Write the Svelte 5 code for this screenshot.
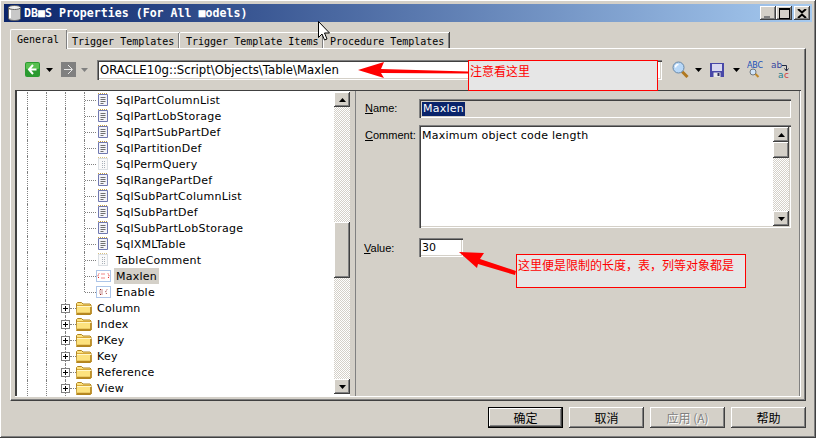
<script>
	const tabs = ["General", "Trigger Templates", "Trigger Template Items", "Procedure Templates"];
	const tabWidths = [57, 112, 144, 126];

	const leaves = [
		["SqlPartColumnList", "doc"],
		["SqlPartLobStorage", "doc"],
		["SqlPartSubPartDef", "doc"],
		["SqlPartitionDef", "doc"],
		["SqlPermQuery", "ghost"],
		["SqlRangePartDef", "doc"],
		["SqlSubPartColumnList", "doc"],
		["SqlSubPartDef", "doc"],
		["SqlSubPartLobStorage", "doc"],
		["SqlXMLTable", "doc"],
		["TableComment", "ghost"],
		["Maxlen", "num"],
		["Enable", "bool"],
	];
	const folders = ["Column", "Index", "PKey", "Key", "Reference", "View"];
	const buttons = ["确定", "取消", "应用 (A)", "帮助"];
</script>

{#snippet caret(dim)}
	<svg class="caret" width="7" height="4" viewBox="0 0 7 4"><path d="M0 0h7L3.5 4z" fill={dim ? "#808080" : "#000"} /></svg>
{/snippet}

{#snippet docIcon(kind)}
	<svg class="ico doc" width="12" height="14" viewBox="0 0 12 14">
		{#if kind === "doc"}
			<path d="M1.5 1.500h9v11h-9z" fill="#f4f4fa" stroke="#7078b0" />
			<path d="M1 .5h10" stroke="#c8a040" stroke-dasharray="1 1" />
			<path d="M3.500 4.500h5M3.500 6.500h5M3.500 8.500h5M3.500 10.500h3" stroke="#707070" />
		{:else}
			<path d="M1.500 1.500h9v11h-9z" fill="#fafafa" stroke="#b8c0c8" stroke-dasharray="1 1" />
			<path d="M1 .5h10" stroke="#d8c080" stroke-dasharray="1 1" />
			<path d="M5.500 4v7M7.500 4v7" stroke="#a8b0b8" stroke-dasharray="1 1" />
		{/if}
	</svg>
{/snippet}

{#snippet codeIcon(kind)}
	<svg class="ico wide" width="15" height="12" viewBox="0 0 15 12">
		<path d="M.5.5h14v11H.5z" fill="#fff" stroke="#5a8ad0" stroke-dasharray="1 1" />
		{#if kind === "num"}
			<path d="M3 3.500 1.800 6 3 8.500M12 3.500 13.200 6 12 8.500M5.500 4h4M5.500 8h4" fill="none" stroke="#e01010" stroke-dasharray="1 1" />
		{:else}
			<path d="M4 3.500h2v5H4zM11 3.500 9.500 6 11 8.500" fill="none" stroke="#902020" stroke-dasharray="1 1" />
		{/if}
	</svg>
{/snippet}

{#snippet folderIcon()}
	<svg class="ico folder" width="16" height="13" viewBox="0 0 16 13">
		<path d="M.5 3V1.500l1-1h4l1.500 1.500h7l1 1v9l-.5.5h-14l-.5-.5z" fill="#fde27e" stroke="#b08420" />
		<path d="M1 3.500h14" stroke="#d8a838" />
		<path d="M1 4.500h14" stroke="#fff6c8" />
		<path d="M1 11.500h14M15 5v7" stroke="#b88820" stroke-width="1.500" />
	</svg>
{/snippet}

<div class="window">
	<header class="titlebar">
		<svg class="app-icon" width="13" height="16" viewBox="0 0 13 16">
			<path d="M.5 2.500v11c0 1.200 2.700 2 6 2s6-.8 6-2v-11z" fill="#c8c8c8" stroke="#606060" />
			<ellipse cx="6.500" cy="2.500" rx="6" ry="2" fill="#f0f0f0" stroke="#606060" />
			<path d="M2 5v8" stroke="#fff" stroke-width="2" />
		</svg>
		<span class="title">DB■S Properties (For All ■odels)</span>
		<div class="controls">
			<button class="ctl" aria-label="Minimize"><i class="min"></i></button>
			<button class="ctl" aria-label="Maximize"><i class="max"></i></button>
			<button class="ctl close" aria-label="Close">
				<svg width="10" height="9" viewBox="0 0 10 9"><path d="M1 0l4 3.500L9 0M1 9l4-3.500L9 9" fill="none" stroke="#000" stroke-width="2" /></svg>
			</button>
		</div>
	</header>

	<nav class="tabs">
		{#each tabs as tab, i}
			<div class="tab" class:active={i === 0} style="width: {tabWidths[i]}px">{tab}</div>
		{/each}
	</nav>

	<section class="panel">
		<div class="toolbar">
			<svg class="tool back" width="15" height="15" viewBox="0 0 15 15">
				<rect width="15" height="15" rx="2" fill="#2a9a30" />
				<rect x="1" y="1" width="13" height="6" rx="1" fill="#58c050" />
				<path d="M8 3 4 7.500 8 12M4.500 7.500h7" fill="none" stroke="#fff" stroke-width="2" />
			</svg>
			<span class="caret-a">{@render caret(false)}</span>
			<svg class="tool fwd" width="15" height="15" viewBox="0 0 15 15">
				<rect width="15" height="15" fill="#808080" />
				<path d="M7 3l4.500 4.500L7 12M3 7.500h8" fill="none" stroke="#e8e8e8" />
			</svg>
			<span class="caret-b">{@render caret(true)}</span>
			<div class="address">ORACLE10g::Script\Objects\Table\Maxlen</div>
			<svg class="tool find" width="17" height="17" viewBox="0 0 17 17">
				<path d="M10 10.500l5.500 5.500" stroke="#b07820" stroke-width="3" />
				<circle cx="6.500" cy="6.500" r="5.500" fill="#b8d8f8" stroke="#6888a8" />
				<path d="M3.500 6.500a3 3 0 0 1 3-3" fill="none" stroke="#fff" stroke-width="1.500" />
			</svg>
			<span class="caret-c">{@render caret(false)}</span>
			<svg class="tool save" width="14" height="14" viewBox="0 0 14 14">
				<rect width="14" height="14" fill="#4848a8" />
				<rect x="2" y="1" width="10" height="7" fill="#d8d8f0" />
				<rect x="3.500" y="9.500" width="7" height="4.500" fill="#e8e8e8" />
				<rect x="7.500" y="10" width="2" height="3" fill="#303060" />
			</svg>
			<span class="caret-d">{@render caret(false)}</span>
			<svg class="tool spell" width="16" height="17" viewBox="0 0 16 17">
				<text x="0" y="7" class="icon-text" fill="#2050b8" textLength="16">ABC</text>
				<circle cx="6" cy="11" r="3" fill="#d0e4f8" stroke="#707880" />
				<path d="M8.500 13l3 3" stroke="#c08828" stroke-width="2" />
			</svg>
			<svg class="tool replace" width="18" height="18" viewBox="0 0 18 18">
				<text x="0" y="7" class="icon-text big" fill="#3848a0">ab</text>
				<path d="M11 4.500h4.500v5M13.500 7.500l2 2.500 2-2.500" fill="none" stroke="#202840" />
				<text x="7" y="17" class="icon-text big" fill="#208090">a</text>
				<text x="13" y="17" class="icon-text big" fill="#d04040">c</text>
			</svg>
		</div>

		<div class="inner">
			<div class="tree-box">
				<ul class="tree">
					{#each leaves as [label, kind], i}
						<li class="row">
							<i class="guide"></i><i class="guide"></i><i class="guide"></i>
							<i class="guide last" class:end={i === leaves.length - 1}></i>
							<span class="stub"></span>
							{#if kind === "doc" || kind === "ghost"}
								{@render docIcon(kind)}
							{:else}
								{@render codeIcon(kind)}
							{/if}
							<span class="label" class:selected={label === "Maxlen"}>{label}</span>
						</li>
					{/each}
					{#each folders as label}
						<li class="row">
							<i class="guide"></i><i class="guide"></i>
							<span class="expander">
								<i class="plus"></i>
							</span>
							{@render folderIcon()}
							<span class="label folder-label">{label}</span>
						</li>
					{/each}
				</ul>
				<div class="scrollbar tree-sb">
					<div class="sb-btn"><svg width="7" height="4" viewBox="0 0 7 4"><path d="M3.500 0 7 4H0z" /></svg></div>
					<div class="track grow-a"></div>
					<div class="thumb tall"></div>
					<div class="track grow-b"></div>
					<div class="sb-btn"><svg width="7" height="4" viewBox="0 0 7 4"><path d="M0 0h7L3.500 4z" /></svg></div>
				</div>
			</div>

			<div class="details">
				<div class="field-row name-row">
					<span class="f-label"><u>N</u>ame:</span>
					<div class="f-name"><span class="sel">Maxlen</span></div>
				</div>
				<div class="field-row comment-row">
					<span class="f-label"><span class="c">C</span>omment:</span>
					<div class="f-comment">
						<div class="comment-text">Maximum object code length</div>
						<div class="scrollbar">
							<div class="sb-btn"><svg width="7" height="4" viewBox="0 0 7 4"><path d="M3.500 0 7 4H0z" /></svg></div>
							<div class="thumb short"></div>
							<div class="track grow-c"></div>
							<div class="sb-btn"><svg width="7" height="4" viewBox="0 0 7 4"><path d="M0 0h7L3.500 4z" /></svg></div>
						</div>
					</div>
				</div>
				<div class="field-row value-row">
					<span class="f-label"><u>V</u>alue:</span>
					<div class="f-value">30</div>
				</div>
			</div>
		</div>
	</section>

	<footer class="actions">
		{#each buttons as b, i}
			<div class="btn" class:default={i === 0} class:disabled={i === 2}>{b}</div>
		{/each}
	</footer>

	<!-- annotations pasted over the dialog -->
	<div class="note note-a">注意看这里</div>
	<div class="note note-b">这里便是限制的长度，表，列等对象都是</div>
	<svg class="overlay" width="816" height="438" viewBox="0 0 816 438">
		<path d="M358 70 384 62 381 69 468 71.500 468 73.500 381 73 384 78z" fill="#f00" />
		<path d="M459 252 484 253 480 259 516 271 515 275 478 264 477 268z" fill="#f00" />
		<path d="M318.500 21.500v16l3.500-3.500 2.500 6 2.500-1-2.500-6h5z" fill="#fff" stroke="#000" />
	</svg>
</div>

<style>
	:global(body) {
		margin: 0;
		background: #d4d0c8;
	}

	.window {
		position: relative;
		width: 816px;
		height: 438px;
		box-sizing: border-box;
		padding: 4px;
		background: #d4d0c8;
		box-shadow: inset -1px -1px #404040, inset 1px 1px #fff, inset -2px -2px #808080;
		font-family: "DejaVu Sans", sans-serif;
		font-size: 11px;
		color: #000;
		overflow: hidden;
		display: flex;
		flex-direction: column;
	}

	.titlebar {
		height: 18px;
		flex: none;
		display: flex;
		align-items: center;
		padding-left: 4px;
		background: linear-gradient(90deg, #0a246a, #a6caf0);
	}
	.app-icon {
		margin-right: 3px;
		flex: none;
	}
	.title {
		font-family: "DejaVu Sans Mono", monospace;
		font-size: 11.6px;
		font-weight: 700;
		color: #fff;
		white-space: pre;
	}
	.controls {
		margin-left: auto;
		margin-right: 2px;
		display: flex;
	}
	.ctl {
		width: 16px;
		height: 14px;
		padding: 0;
		border: 0;
		background: #d4d0c8;
		box-shadow: inset -1px -1px #404040, inset 1px 1px #fff, inset -2px -2px #808080;
		display: flex;
		align-items: center;
		justify-content: center;
		position: relative;
	}
	.ctl.close {
		margin-left: 2px;
	}
	.min {
		width: 6px;
		height: 2px;
		background: #808080;
		margin-top: 7px;
		margin-right: 2px;
	}
	.max {
		width: 9px;
		height: 8px;
		border: 1px solid #000;
		border-top-width: 2px;
	}

	.tabs {
		margin: 7px 0 0 6px;
		height: 19px;
		flex: none;
		display: flex;
		align-items: flex-end;
		font-family: "DejaVu Sans Mono", monospace;
		font-size: 10px;
	}
	.tab {
		height: 16px;
		box-sizing: border-box;
		padding: 3px 0 0 4px;
		white-space: nowrap;
		background: #d4d0c8;
		border-top: 1px solid #fff;
		border-left: 1px solid #fff;
		box-shadow: inset -1px 0 #808080, 1px 0 #404040;
		border-top-left-radius: 2px;
		overflow: hidden;
	}
	.tab:nth-child(n + 3) {
		padding-left: 6px;
	}
	.tab.active {
		height: 20px;
		padding: 4px 0 0 6px;
		margin-bottom: -1px;
		position: relative;
		z-index: 1;
		box-shadow: inset -1px 0 #808080;
	}

	.panel {
		margin: 0 0 0 6px;
		width: 796px;
		height: 353px;
		flex: none;
		box-sizing: border-box;
		background: #d4d0c8;
		border-top: 1px solid #fff;
		border-left: 1px solid #fff;
		border-right: 1px solid #404040;
		border-bottom: 1px solid #404040;
		box-shadow: inset -1px -1px #808080;
		display: flex;
		flex-direction: column;
	}

	.toolbar {
		height: 41px;
		flex: none;
		display: flex;
		align-items: center;
		padding-left: 14px;
	}
	.tool, .caret {
		display: block;
		flex: none;
	}
	.caret-a { margin: 1px 8px 0 6px; }
	.caret-b { margin: 1px 9px 0 5px; }
	.caret-c { margin: 1px 8px 0 6px; }
	.caret-d { margin: 1px 7px 0 9px; }
	.replace { margin-left: 8px; }
	.find { margin-left: 10px; }
	.address {
		width: 565px;
		height: 20px;
		box-sizing: border-box;
		flex: none;
		padding: 3px 0 0 3px;
		background: #fff;
		box-shadow: inset 1px 1px #808080, inset 2px 2px #404040, inset -1px -1px #fff, inset -2px -2px #d4d0c8;
		white-space: nowrap;
		font-size: 11.7px;
		line-height: 14px;
	}
	.icon-text {
		font-family: "DejaVu Sans", sans-serif;
		font-size: 8px;
	}
	.icon-text.big {
		font-size: 9px;
	}

	.inner {
		flex: 1;
		margin: 0 4px 3px 4px;
		display: flex;
		min-height: 0;
		box-shadow: inset 0 1px #404040, inset -1px -1px #fff;
		padding: 1px 1px 1px 0;
	}

	.tree-box {
		width: 335px;
		flex: none;
		padding-top: 1px;
		display: flex;
		background: #fff;
		box-sizing: border-box;
		border-left: 2px solid #404040;
		overflow: hidden;
	}
	.tree {
		flex: 1;
		margin: 0;
		padding: 0;
		list-style: none;
		overflow: hidden;
		letter-spacing: 0.24px;
	}
	.row {
		height: 16px;
		display: flex;
		align-items: center;
		white-space: nowrap;
	}
	.guide {
		width: 19px;
		height: 16px;
		flex: none;
		box-sizing: border-box;
		border-left: 1px dotted #808080;
	}
	.guide:first-child {
		margin-left: 10px;
	}
	.guide.last {
		width: 1px;
	}
	.guide.end {
		height: 8px;
		align-self: flex-start;
	}
	.stub {
		width: 11px;
		border-top: 1px dotted #808080;
		flex: none;
	}
	.ico {
		flex: none;
		display: block;
	}
	.doc {
		margin-left: 1px;
	}
	.wide {
		margin-right: -2px;
	}
	.label {
		margin-left: 5px;
		padding: 1px 2px 0;
		line-height: 15px;
	}
	.label.selected {
		background: #d4d0c8;
	}
	.folder-label {
		margin-left: 3px;
	}
	.expander {
		position: relative;
		width: 11px;
		height: 16px;
		flex: none;
		border-left: 1px dotted #808080;
		box-sizing: border-box;
	}
	.plus {
		position: absolute;
		left: -5px;
		top: 4px;
		width: 9px;
		height: 9px;
		box-sizing: border-box;
		border: 1px solid #808080;
		background:
			linear-gradient(#000, #000) center / 5px 1px no-repeat,
			linear-gradient(#000, #000) center / 1px 5px no-repeat,
			#fff;
	}
	.expander::after {
		content: "";
		position: absolute;
		left: 4px;
		top: 8px;
		width: 6px;
		border-top: 1px dotted #808080;
	}

	.scrollbar {
		width: 16px;
		flex: none;
		display: flex;
		flex-direction: column;
		align-items: stretch;
	}
	.tree-sb {
		margin-bottom: 2px;
	}
	.sb-btn, .thumb {
		flex: none;
		height: 15px;
		background: #d4d0c8;
		box-shadow: inset -1px -1px #404040, inset 1px 1px #fff, inset -2px -2px #808080;
		display: flex;
		align-items: center;
		justify-content: center;
	}
	.thumb.tall { height: 56px; }
	.thumb.short { height: 16px; }
	.track {
		background: repeating-conic-gradient(#fff 0 25%, #d4d0c8 0 50%) 0 0 / 2px 2px;
	}
	.grow-a { height: 115px; }
	.grow-b { flex: 1; }
	.grow-c { flex: 1; }

	.details {
		flex: 1;
		margin-left: 5px;
		box-sizing: border-box;
		padding: 8px 9px 0 10px;
		box-shadow: inset 1px 0 #808080, inset -1px 0 #808080;
		display: flex;
		flex-direction: column;
	}
	.field-row {
		display: flex;
		flex: none;
	}
	.f-label {
		width: 54px;
		flex: none;
		padding-top: 2px;
		white-space: nowrap;
		font-family: "Liberation Sans", sans-serif;
		line-height: 15px;
	}
	.f-label u, .c {
		text-decoration: underline;
	}
	.f-name {
		flex: 1;
		height: 19px;
		box-sizing: border-box;
		padding: 3px 0 0 3px;
		box-shadow: inset 1px 1px #808080, inset 2px 2px #404040, inset -1px -1px #fff, inset -2px -2px #d4d0c8;
		line-height: 14px;
		letter-spacing: 0.24px;
	}
	.sel {
		display: inline-block;
		background: #0a246a;
		color: #fff;
		padding: 0 1px;
	}
	.comment-row {
		margin-top: 7px;
	}
	.comment-row .f-label {
		padding-top: 3px;
	}
	.f-comment {
		flex: 1;
		height: 103px;
		box-sizing: border-box;
		padding: 2px;
		background: #fff;
		box-shadow: inset 1px 1px #808080, inset 2px 2px #404040, inset -1px -1px #fff, inset -2px -2px #d4d0c8;
		display: flex;
	}
	.comment-text {
		flex: 1;
		padding: 2px 1px 0;
		letter-spacing: 0.24px;
	}
	.value-row {
		margin-top: 10px;
	}
	.value-row .f-label {
		padding-top: 3px;
		margin-left: -1px;
		margin-right: 1px;
	}
	.f-value {
		width: 44px;
		height: 19px;
		box-sizing: border-box;
		padding: 3px 0 0 3px;
		line-height: 14px;
		background: #fff;
		box-shadow: inset 1px 1px #808080, inset 2px 2px #404040, inset -1px -1px #fff, inset -2px -2px #d4d0c8;
	}

	.actions {
		flex: 1;
		display: flex;
		justify-content: flex-end;
		gap: 6px;
		padding: 6px 6px 0 0;
		font-family: "Noto Sans CJK SC", sans-serif;
		font-size: 12px;
	}
	.btn {
		width: 75px;
		height: 21px;
		box-sizing: border-box;
		display: flex;
		align-items: center;
		justify-content: center;
		box-shadow: inset -1px -1px #404040, inset 1px 1px #fff, inset -2px -2px #808080;
	}
	.btn.default {
		box-shadow: inset 0 0 0 1px #000, inset -2px -2px #404040, inset 2px 2px #fff, inset -3px -3px #808080;
	}
	.btn.disabled {
		color: #808080;
		text-shadow: 1px 1px #fff;
	}

	.note {
		position: absolute;
		box-sizing: border-box;
		background: #e6e6e6;
		border: 1px solid #f00;
		color: #f00;
		font-family: "Noto Sans CJK SC", sans-serif;
		font-size: 12px;
		line-height: 14px;
		padding: 3px 1px;
		white-space: nowrap;
	}
	.note-a {
		left: 468px;
		top: 60px;
		width: 190px;
		height: 31px;
	}
	.note-b {
		left: 516px;
		top: 254px;
		width: 230px;
		height: 34px;
	}
	.overlay {
		position: absolute;
		left: 0;
		top: 0;
		pointer-events: none;
	}
</style>
